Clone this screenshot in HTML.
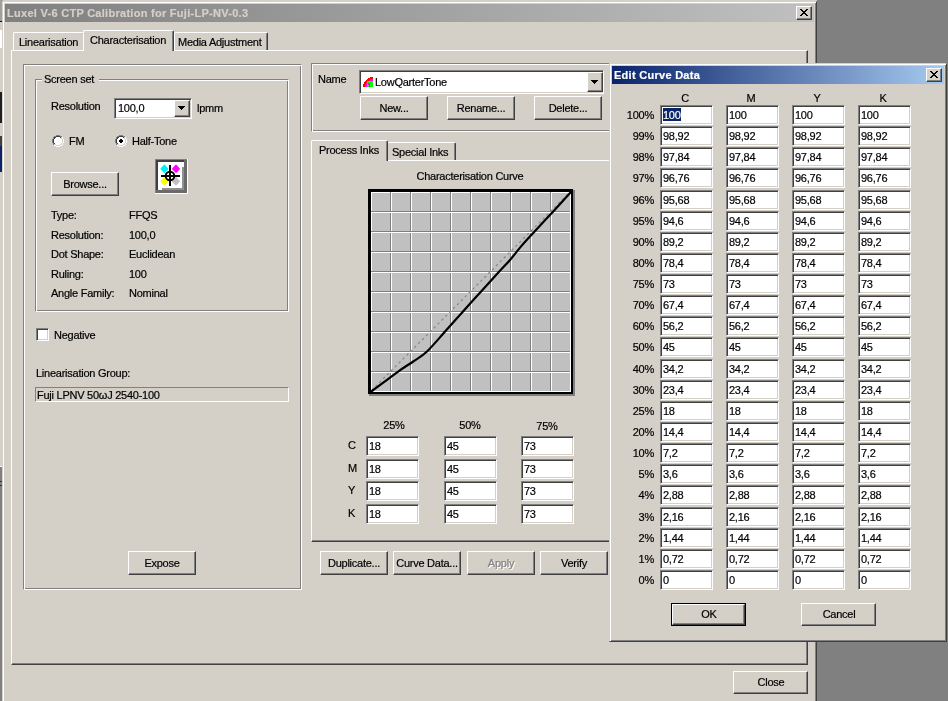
<!DOCTYPE html><html><head><meta charset="utf-8"><style>
html,body{margin:0;padding:0;}
body{width:948px;height:701px;overflow:hidden;position:relative;background:#808080;font-family:"Liberation Sans",sans-serif;font-size:11px;color:#000;}
div{position:absolute;box-sizing:border-box;}
.t{will-change:transform;-webkit-text-stroke:0.2px currentColor;white-space:nowrap;line-height:13px;height:13px;letter-spacing:-0.25px;}
.b{font-weight:bold;letter-spacing:0.28px;}
.btn{background:#d4d0c8;border-style:solid;border-width:1px;border-color:#fff #404040 #404040 #fff;box-shadow:inset -1px -1px #808080;}
.btn.def{border-color:#000;box-shadow:none;}
.btn.def .in{left:0;top:0;right:0;bottom:0;border-style:solid;border-width:1px;border-color:#fff #404040 #404040 #fff;box-shadow:inset -1px -1px #808080;}
.edit{background:#fff;border-style:solid;border-width:1px;border-color:#808080 #fff #fff #808080;box-shadow:inset 1px 1px #404040, inset -1px -1px #d4d0c8;}
.etch{border-style:solid;border-width:1px;border-color:#808080 #fff #fff #808080;box-shadow:inset 1px 1px #fff, inset -1px -1px #808080;}
.win{background:#d4d0c8;border-style:solid;border-width:1px;border-color:#d4d0c8 #404040 #404040 #d4d0c8;box-shadow:inset 1px 1px #fff, inset -1px -1px #808080;}
.panel{background:#d4d0c8;border-style:solid;border-width:1px;border-color:#fff #404040 #404040 #fff;box-shadow:inset -1px -1px #808080;}
.tab{background:#d4d0c8;border-style:solid;border-width:1px 1px 0 1px;border-color:#fff #404040 #404040 #fff;box-shadow:inset -1px 0 #808080;border-radius:2px 2px 0 0;}
</style></head><body>
<div style="left:3px;top:0px;width:814px;height:2px;background:#d4d0c8"></div>
<div style="left:0px;top:0px;width:3px;height:21px;background:#a0a0a0"></div>
<div style="left:0px;top:21px;width:3px;height:1px;background:#000"></div>
<div style="left:0px;top:22px;width:3px;height:8px;background:#d4d0c8"></div>
<div style="left:0px;top:30px;width:3px;height:18px;background:#fff"></div>
<div style="left:0px;top:48px;width:3px;height:44px;background:#d4d0c8"></div>
<div style="left:0px;top:92px;width:3px;height:31px;background:#202020"></div>
<div style="left:0px;top:123px;width:3px;height:13px;background:#d4d0c8"></div>
<div style="left:0px;top:136px;width:3px;height:10px;background:#404040"></div>
<div style="left:0px;top:146px;width:3px;height:26px;background:#0a246a"></div>
<div style="left:0px;top:172px;width:3px;height:295px;background:#d4d0c8"></div>
<div style="left:0px;top:466px;width:3px;height:1px;background:#fff"></div>
<div style="left:0px;top:481px;width:3px;height:1px;background:#303030"></div>
<div style="left:0px;top:485px;width:3px;height:1px;background:#303030"></div>
<div style="left:0px;top:488px;width:3px;height:213px;background:#808080"></div>
<div class="win" style="left:2px;top:1px;width:815px;height:720px"></div>
<div style="left:5px;top:4px;width:809px;height:18px;background:linear-gradient(90deg,#808080,#c0c0c0)"></div>
<div class="t b" style="left:7px;top:7px;color:#d4d0c8">Luxel V-6 CTP Calibration for Fuji-LP-NV-0.3</div>
<div class="btn" style="left:796px;top:6px;width:16px;height:14px"></div>
<svg style="position:absolute;left:796px;top:6px" width="16" height="14"><g fill="#000"><rect x="4" y="3" width="1" height="1"/><rect x="5" y="3" width="1" height="1"/><rect x="10" y="3" width="1" height="1"/><rect x="11" y="3" width="1" height="1"/><rect x="5" y="4" width="1" height="1"/><rect x="6" y="4" width="1" height="1"/><rect x="9" y="4" width="1" height="1"/><rect x="10" y="4" width="1" height="1"/><rect x="6" y="5" width="1" height="1"/><rect x="7" y="5" width="1" height="1"/><rect x="8" y="5" width="1" height="1"/><rect x="9" y="5" width="1" height="1"/><rect x="7" y="6" width="1" height="1"/><rect x="8" y="6" width="1" height="1"/><rect x="6" y="7" width="1" height="1"/><rect x="7" y="7" width="1" height="1"/><rect x="8" y="7" width="1" height="1"/><rect x="9" y="7" width="1" height="1"/><rect x="5" y="8" width="1" height="1"/><rect x="6" y="8" width="1" height="1"/><rect x="9" y="8" width="1" height="1"/><rect x="10" y="8" width="1" height="1"/><rect x="4" y="9" width="1" height="1"/><rect x="5" y="9" width="1" height="1"/><rect x="10" y="9" width="1" height="1"/><rect x="11" y="9" width="1" height="1"/></g></svg>
<div class="panel" style="left:11px;top:50px;width:797px;height:615px"></div>
<div class="tab" style="left:13px;top:32px;width:72px;height:18px"></div>
<div class="tab" style="left:174px;top:32px;width:94px;height:18px"></div>
<div class="tab" style="left:83px;top:30px;width:91px;height:21px;"></div>
<div class="t" style="left:19px;top:36px;">Linearisation</div>
<div class="t" style="left:90px;top:34px;">Characterisation</div>
<div class="t" style="left:178px;top:36px;">Media Adjustment</div>
<div class="btn" style="left:733px;top:671px;width:75px;height:23px"></div>
<div class="t" style="left:670.5px;width:200px;text-align:center;top:676px;">Close</div>
<div class="etch" style="left:23px;top:64px;width:279px;height:526px"></div>
<div class="etch" style="left:35px;top:79px;width:254px;height:233px"></div>
<div style="left:42px;top:73px;width:57px;height:12px;background:#d4d0c8"></div>
<div class="t" style="left:44px;top:73px;">Screen set</div>
<div class="t" style="left:51px;top:100px;">Resolution</div>
<div class="edit" style="left:114px;top:98px;width:78px;height:21px"></div>
<div class="t" style="left:118px;top:102px;">100,0</div>
<div class="btn" style="left:174px;top:100px;width:16px;height:17px"></div>
<svg style="position:absolute;left:174px;top:100px" width="16" height="17"><path d="M4 6h7M5 7h5M6 8h3M7 9h1" stroke="#000" shape-rendering="crispEdges"/></svg>
<div class="t" style="left:197px;top:102px;">lpmm</div>
<svg style="position:absolute;left:52px;top:135px" width="12" height="12" shape-rendering="crispEdges"><rect x="2" y="1" width="8" height="1" fill="#fff"/><rect x="1" y="2" width="10" height="1" fill="#fff"/><rect x="1" y="3" width="10" height="1" fill="#fff"/><rect x="0" y="4" width="12" height="1" fill="#fff"/><rect x="0" y="5" width="12" height="1" fill="#fff"/><rect x="0" y="6" width="12" height="1" fill="#fff"/><rect x="0" y="7" width="12" height="1" fill="#fff"/><rect x="1" y="8" width="10" height="1" fill="#fff"/><rect x="1" y="9" width="10" height="1" fill="#fff"/><rect x="2" y="10" width="8" height="1" fill="#fff"/><rect x="4" y="0" width="1" height="1" fill="#808080"/><rect x="5" y="0" width="1" height="1" fill="#808080"/><rect x="6" y="0" width="1" height="1" fill="#808080"/><rect x="7" y="0" width="1" height="1" fill="#808080"/><rect x="2" y="1" width="1" height="1" fill="#808080"/><rect x="3" y="1" width="1" height="1" fill="#808080"/><rect x="8" y="1" width="1" height="1" fill="#808080"/><rect x="9" y="1" width="1" height="1" fill="#808080"/><rect x="1" y="2" width="1" height="1" fill="#808080"/><rect x="10" y="2" width="1" height="1" fill="#fff"/><rect x="1" y="3" width="1" height="1" fill="#808080"/><rect x="10" y="3" width="1" height="1" fill="#fff"/><rect x="0" y="4" width="1" height="1" fill="#808080"/><rect x="11" y="4" width="1" height="1" fill="#fff"/><rect x="0" y="5" width="1" height="1" fill="#808080"/><rect x="11" y="5" width="1" height="1" fill="#fff"/><rect x="0" y="6" width="1" height="1" fill="#808080"/><rect x="11" y="6" width="1" height="1" fill="#fff"/><rect x="0" y="7" width="1" height="1" fill="#808080"/><rect x="11" y="7" width="1" height="1" fill="#fff"/><rect x="1" y="8" width="1" height="1" fill="#808080"/><rect x="10" y="8" width="1" height="1" fill="#fff"/><rect x="1" y="9" width="1" height="1" fill="#808080"/><rect x="10" y="9" width="1" height="1" fill="#fff"/><rect x="2" y="10" width="1" height="1" fill="#fff"/><rect x="3" y="10" width="1" height="1" fill="#fff"/><rect x="8" y="10" width="1" height="1" fill="#fff"/><rect x="9" y="10" width="1" height="1" fill="#fff"/><rect x="4" y="11" width="1" height="1" fill="#fff"/><rect x="5" y="11" width="1" height="1" fill="#fff"/><rect x="6" y="11" width="1" height="1" fill="#fff"/><rect x="7" y="11" width="1" height="1" fill="#fff"/><rect x="4" y="1" width="1" height="1" fill="#404040"/><rect x="5" y="1" width="1" height="1" fill="#404040"/><rect x="6" y="1" width="1" height="1" fill="#404040"/><rect x="7" y="1" width="1" height="1" fill="#404040"/><rect x="2" y="2" width="1" height="1" fill="#404040"/><rect x="3" y="2" width="1" height="1" fill="#404040"/><rect x="8" y="2" width="1" height="1" fill="#404040"/><rect x="9" y="2" width="1" height="1" fill="#d4d0c8"/><rect x="2" y="3" width="1" height="1" fill="#404040"/><rect x="9" y="3" width="1" height="1" fill="#d4d0c8"/><rect x="1" y="4" width="1" height="1" fill="#404040"/><rect x="10" y="4" width="1" height="1" fill="#d4d0c8"/><rect x="1" y="5" width="1" height="1" fill="#404040"/><rect x="10" y="5" width="1" height="1" fill="#d4d0c8"/><rect x="1" y="6" width="1" height="1" fill="#404040"/><rect x="10" y="6" width="1" height="1" fill="#d4d0c8"/><rect x="1" y="7" width="1" height="1" fill="#404040"/><rect x="10" y="7" width="1" height="1" fill="#d4d0c8"/><rect x="2" y="8" width="1" height="1" fill="#404040"/><rect x="9" y="8" width="1" height="1" fill="#d4d0c8"/><rect x="2" y="9" width="1" height="1" fill="#d4d0c8"/><rect x="3" y="9" width="1" height="1" fill="#d4d0c8"/><rect x="8" y="9" width="1" height="1" fill="#d4d0c8"/><rect x="9" y="9" width="1" height="1" fill="#d4d0c8"/><rect x="4" y="10" width="1" height="1" fill="#d4d0c8"/><rect x="5" y="10" width="1" height="1" fill="#d4d0c8"/><rect x="6" y="10" width="1" height="1" fill="#d4d0c8"/><rect x="7" y="10" width="1" height="1" fill="#d4d0c8"/></svg>
<div class="t" style="left:69px;top:135px;">FM</div>
<svg style="position:absolute;left:115px;top:135px" width="12" height="12" shape-rendering="crispEdges"><rect x="2" y="1" width="8" height="1" fill="#fff"/><rect x="1" y="2" width="10" height="1" fill="#fff"/><rect x="1" y="3" width="10" height="1" fill="#fff"/><rect x="0" y="4" width="12" height="1" fill="#fff"/><rect x="0" y="5" width="12" height="1" fill="#fff"/><rect x="0" y="6" width="12" height="1" fill="#fff"/><rect x="0" y="7" width="12" height="1" fill="#fff"/><rect x="1" y="8" width="10" height="1" fill="#fff"/><rect x="1" y="9" width="10" height="1" fill="#fff"/><rect x="2" y="10" width="8" height="1" fill="#fff"/><rect x="4" y="0" width="1" height="1" fill="#808080"/><rect x="5" y="0" width="1" height="1" fill="#808080"/><rect x="6" y="0" width="1" height="1" fill="#808080"/><rect x="7" y="0" width="1" height="1" fill="#808080"/><rect x="2" y="1" width="1" height="1" fill="#808080"/><rect x="3" y="1" width="1" height="1" fill="#808080"/><rect x="8" y="1" width="1" height="1" fill="#808080"/><rect x="9" y="1" width="1" height="1" fill="#808080"/><rect x="1" y="2" width="1" height="1" fill="#808080"/><rect x="10" y="2" width="1" height="1" fill="#fff"/><rect x="1" y="3" width="1" height="1" fill="#808080"/><rect x="10" y="3" width="1" height="1" fill="#fff"/><rect x="0" y="4" width="1" height="1" fill="#808080"/><rect x="11" y="4" width="1" height="1" fill="#fff"/><rect x="0" y="5" width="1" height="1" fill="#808080"/><rect x="11" y="5" width="1" height="1" fill="#fff"/><rect x="0" y="6" width="1" height="1" fill="#808080"/><rect x="11" y="6" width="1" height="1" fill="#fff"/><rect x="0" y="7" width="1" height="1" fill="#808080"/><rect x="11" y="7" width="1" height="1" fill="#fff"/><rect x="1" y="8" width="1" height="1" fill="#808080"/><rect x="10" y="8" width="1" height="1" fill="#fff"/><rect x="1" y="9" width="1" height="1" fill="#808080"/><rect x="10" y="9" width="1" height="1" fill="#fff"/><rect x="2" y="10" width="1" height="1" fill="#fff"/><rect x="3" y="10" width="1" height="1" fill="#fff"/><rect x="8" y="10" width="1" height="1" fill="#fff"/><rect x="9" y="10" width="1" height="1" fill="#fff"/><rect x="4" y="11" width="1" height="1" fill="#fff"/><rect x="5" y="11" width="1" height="1" fill="#fff"/><rect x="6" y="11" width="1" height="1" fill="#fff"/><rect x="7" y="11" width="1" height="1" fill="#fff"/><rect x="4" y="1" width="1" height="1" fill="#404040"/><rect x="5" y="1" width="1" height="1" fill="#404040"/><rect x="6" y="1" width="1" height="1" fill="#404040"/><rect x="7" y="1" width="1" height="1" fill="#404040"/><rect x="2" y="2" width="1" height="1" fill="#404040"/><rect x="3" y="2" width="1" height="1" fill="#404040"/><rect x="8" y="2" width="1" height="1" fill="#404040"/><rect x="9" y="2" width="1" height="1" fill="#d4d0c8"/><rect x="2" y="3" width="1" height="1" fill="#404040"/><rect x="9" y="3" width="1" height="1" fill="#d4d0c8"/><rect x="1" y="4" width="1" height="1" fill="#404040"/><rect x="10" y="4" width="1" height="1" fill="#d4d0c8"/><rect x="1" y="5" width="1" height="1" fill="#404040"/><rect x="10" y="5" width="1" height="1" fill="#d4d0c8"/><rect x="1" y="6" width="1" height="1" fill="#404040"/><rect x="10" y="6" width="1" height="1" fill="#d4d0c8"/><rect x="1" y="7" width="1" height="1" fill="#404040"/><rect x="10" y="7" width="1" height="1" fill="#d4d0c8"/><rect x="2" y="8" width="1" height="1" fill="#404040"/><rect x="9" y="8" width="1" height="1" fill="#d4d0c8"/><rect x="2" y="9" width="1" height="1" fill="#d4d0c8"/><rect x="3" y="9" width="1" height="1" fill="#d4d0c8"/><rect x="8" y="9" width="1" height="1" fill="#d4d0c8"/><rect x="9" y="9" width="1" height="1" fill="#d4d0c8"/><rect x="4" y="10" width="1" height="1" fill="#d4d0c8"/><rect x="5" y="10" width="1" height="1" fill="#d4d0c8"/><rect x="6" y="10" width="1" height="1" fill="#d4d0c8"/><rect x="7" y="10" width="1" height="1" fill="#d4d0c8"/><rect x="5" y="4" width="2" height="4" fill="#000"/><rect x="4" y="5" width="4" height="2" fill="#000"/></svg>
<div class="t" style="left:132px;top:135px;">Half-Tone</div>
<div class="btn" style="left:51px;top:172px;width:68px;height:24px"></div>
<div class="t" style="left:-15.0px;width:200px;text-align:center;top:178px;">Browse...</div>
<svg style="position:absolute;left:155px;top:159px" width="33" height="35" shape-rendering="crispEdges">
<rect x="0" y="0" width="33" height="35" fill="#fff"/>
<rect x="0" y="0" width="32" height="1" fill="#808080"/>
<rect x="0" y="0" width="1" height="34" fill="#808080"/>
<rect x="1" y="1" width="31" height="2" fill="#404040"/>
<rect x="1" y="1" width="2" height="33" fill="#404040"/>
<rect x="29" y="1" width="3" height="33" fill="#6a6a6a"/>
<rect x="1" y="31" width="31" height="3" fill="#6a6a6a"/>
<rect x="7" y="29" width="22" height="2" fill="#909090"/>
<rect x="27" y="8" width="2" height="23" fill="#909090"/>
</svg>
<svg style="position:absolute;left:155px;top:159px" width="33" height="35">
<path d="M9.4 6.2 L12.8 9.8 L9.4 13.4 L6 9.8Z" fill="#00f0f0" stroke="#00f0f0" stroke-width="1.2" stroke-linejoin="round"/>
<path d="M21 6.2 L24.4 9.8 L21 13.4 L17.6 9.8Z" fill="#ff00ff" stroke="#ff00ff" stroke-width="1.2" stroke-linejoin="round"/>
<path d="M9.4 18.7 L12.8 22.3 L9.4 25.9 L6 22.3Z" fill="#ffff00" stroke="#ffff00" stroke-width="1.2" stroke-linejoin="round"/>
<path d="M21 18.7 L24.4 22.3 L21 25.9 L17.6 22.3Z" fill="#c0c0c0" stroke="#c0c0c0" stroke-width="1.2" stroke-linejoin="round"/>
<circle cx="15" cy="17" r="4.3" stroke="#000" stroke-width="2" fill="none"/>
<path d="M6 17H25M15 6V27" stroke="#000" stroke-width="2"/>
</svg>
<div class="t" style="left:51px;top:209px;">Type:</div>
<div class="t" style="left:129px;top:209px;">FFQS</div>
<div class="t" style="left:51px;top:229px;">Resolution:</div>
<div class="t" style="left:129px;top:229px;">100,0</div>
<div class="t" style="left:51px;top:248px;">Dot Shape:</div>
<div class="t" style="left:129px;top:248px;">Euclidean</div>
<div class="t" style="left:51px;top:268px;">Ruling:</div>
<div class="t" style="left:129px;top:268px;">100</div>
<div class="t" style="left:51px;top:287px;">Angle Family:</div>
<div class="t" style="left:129px;top:287px;">Nominal</div>
<div class="edit" style="left:36px;top:328px;width:13px;height:13px"></div>
<div class="t" style="left:54px;top:329px;">Negative</div>
<div class="t" style="left:36px;top:367px;">Linearisation Group:</div>
<div style="left:35px;top:387px;width:254px;height:15px;border-style:solid;border-width:1px;border-color:#808080 #fff #fff #808080"></div>
<div class="t" style="left:37px;top:389px;">Fuji LPNV 50&#969;J 2540-100</div>
<div class="btn" style="left:128px;top:551px;width:68px;height:24px"></div>
<div class="t" style="left:62.0px;width:200px;text-align:center;top:557px;">Expose</div>
<div class="etch" style="left:311px;top:63px;width:310px;height:69px"></div>
<div class="t" style="left:318px;top:73px;">Name</div>
<div class="edit" style="left:359px;top:70px;width:245px;height:24px"></div>
<svg style="position:absolute;left:363px;top:77px" width="10" height="10" shape-rendering="crispEdges"><path d="M0 10 A10 10 0 0 1 10 0 V10Z" fill="#ff0000"/><path d="M2 10 A8 8 0 0 1 10 2 V10Z" fill="#ff00ff"/><rect x="4" y="4" width="6" height="6" fill="#00ff00"/><rect x="5" y="6" width="2" height="2" fill="#ff00ff"/><rect x="6" y="8" width="1" height="2" fill="#ff00ff"/></svg>
<div class="t" style="left:375px;top:76px;">LowQarterTone</div>
<div class="btn" style="left:587px;top:72px;width:16px;height:20px"></div>
<svg style="position:absolute;left:587px;top:72px" width="16" height="20"><path d="M4 8h7M5 9h5M6 10h3M7 11h1" stroke="#000" shape-rendering="crispEdges"/></svg>
<div class="btn" style="left:360px;top:96px;width:68px;height:24px"></div>
<div class="t" style="left:294.0px;width:200px;text-align:center;top:102px;">New...</div>
<div class="btn" style="left:447px;top:96px;width:68px;height:24px"></div>
<div class="t" style="left:381.0px;width:200px;text-align:center;top:102px;">Rename...</div>
<div class="btn" style="left:534px;top:96px;width:68px;height:24px"></div>
<div class="t" style="left:468.0px;width:200px;text-align:center;top:102px;">Delete...</div>
<div class="panel" style="left:311px;top:160px;width:310px;height:382px"></div>
<div class="tab" style="left:387px;top:142px;width:69px;height:18px"></div>
<div class="tab" style="left:311px;top:140px;width:77px;height:21px"></div>
<div class="t" style="left:319px;top:144px;">Process Inks</div>
<div class="t" style="left:392px;top:146px;">Special Inks</div>
<div class="t" style="left:370px;width:200px;text-align:center;top:170px;">Characterisation Curve</div>
<svg style="position:absolute;left:0;top:0" width="948" height="701">
<rect x="368" y="189" width="205" height="205" fill="#000"/>
<rect x="573" y="190" width="2" height="206" fill="#808080"/>
<rect x="369" y="394" width="206" height="2" fill="#808080"/>
<rect x="371" y="192" width="200" height="200" fill="#fff"/>
<rect x="372" y="193" width="198" height="198" fill="#c0c0c0"/>
<rect x="390" y="192" width="1" height="199" fill="#808080"/><rect x="391" y="192" width="1" height="199" fill="#fff"/><rect x="410" y="192" width="1" height="199" fill="#808080"/><rect x="411" y="192" width="1" height="199" fill="#fff"/><rect x="430" y="192" width="1" height="199" fill="#808080"/><rect x="431" y="192" width="1" height="199" fill="#fff"/><rect x="450" y="192" width="1" height="199" fill="#808080"/><rect x="451" y="192" width="1" height="199" fill="#fff"/><rect x="470" y="192" width="1" height="199" fill="#808080"/><rect x="471" y="192" width="1" height="199" fill="#fff"/><rect x="490" y="192" width="1" height="199" fill="#808080"/><rect x="491" y="192" width="1" height="199" fill="#fff"/><rect x="510" y="192" width="1" height="199" fill="#808080"/><rect x="511" y="192" width="1" height="199" fill="#fff"/><rect x="530" y="192" width="1" height="199" fill="#808080"/><rect x="531" y="192" width="1" height="199" fill="#fff"/><rect x="550" y="192" width="1" height="199" fill="#808080"/><rect x="551" y="192" width="1" height="199" fill="#fff"/><rect x="371" y="211" width="199" height="1" fill="#808080"/><rect x="371" y="212" width="199" height="1" fill="#fff"/><rect x="371" y="231" width="199" height="1" fill="#808080"/><rect x="371" y="232" width="199" height="1" fill="#fff"/><rect x="371" y="251" width="199" height="1" fill="#808080"/><rect x="371" y="252" width="199" height="1" fill="#fff"/><rect x="371" y="271" width="199" height="1" fill="#808080"/><rect x="371" y="272" width="199" height="1" fill="#fff"/><rect x="371" y="291" width="199" height="1" fill="#808080"/><rect x="371" y="292" width="199" height="1" fill="#fff"/><rect x="371" y="311" width="199" height="1" fill="#808080"/><rect x="371" y="312" width="199" height="1" fill="#fff"/><rect x="371" y="331" width="199" height="1" fill="#808080"/><rect x="371" y="332" width="199" height="1" fill="#fff"/><rect x="371" y="351" width="199" height="1" fill="#808080"/><rect x="371" y="352" width="199" height="1" fill="#fff"/><rect x="371" y="371" width="199" height="1" fill="#808080"/><rect x="371" y="372" width="199" height="1" fill="#fff"/>
<path d="M371.5 390.5 L569.5 192.5" stroke="#8a8a8a" stroke-width="1.3" stroke-dasharray="2.5 3" fill="none"/>
<path d="M371.5 391.5 C380.3 384.9 390.9 376.8 397.8 371.8 C404.8 366.8 408.3 364.9 413.2 361.5 C418.1 358.1 421.5 356.7 427.0 351.5 C432.5 346.3 440.0 337.1 446.0 330.5 C452.0 323.9 456.6 318.6 462.8 311.7 C469.0 304.8 477.4 295.5 483.4 288.9 C489.4 282.3 494.4 276.8 498.8 272.0 C503.2 267.2 506.2 264.4 510.0 260.0 C513.8 255.6 517.6 250.4 521.7 245.6 C525.8 240.8 529.4 237.1 534.6 231.4 C539.8 225.8 547.0 218.2 553.0 211.7 C559.0 205.2 564.7 198.9 570.5 192.5" stroke="#000" stroke-width="2.2" fill="none" stroke-linecap="round"/>
</svg>
<div class="t" style="left:294px;width:200px;text-align:center;top:419px;">25%</div>
<div class="t" style="left:370px;width:200px;text-align:center;top:419px;">50%</div>
<div class="t" style="left:447px;width:200px;text-align:center;top:420px;">75%</div>
<div class="t" style="left:348px;top:439px;">C</div>
<div class="edit" style="left:366px;top:436px;width:53px;height:20px"></div>
<div class="t" style="left:369px;top:440px;">18</div>
<div class="edit" style="left:444px;top:436px;width:53px;height:20px"></div>
<div class="t" style="left:447px;top:440px;">45</div>
<div class="edit" style="left:521px;top:436px;width:53px;height:20px"></div>
<div class="t" style="left:524px;top:440px;">73</div>
<div class="t" style="left:348px;top:462px;">M</div>
<div class="edit" style="left:366px;top:459px;width:53px;height:20px"></div>
<div class="t" style="left:369px;top:463px;">18</div>
<div class="edit" style="left:444px;top:459px;width:53px;height:20px"></div>
<div class="t" style="left:447px;top:463px;">45</div>
<div class="edit" style="left:521px;top:459px;width:53px;height:20px"></div>
<div class="t" style="left:524px;top:463px;">73</div>
<div class="t" style="left:348px;top:484px;">Y</div>
<div class="edit" style="left:366px;top:481px;width:53px;height:20px"></div>
<div class="t" style="left:369px;top:485px;">18</div>
<div class="edit" style="left:444px;top:481px;width:53px;height:20px"></div>
<div class="t" style="left:447px;top:485px;">45</div>
<div class="edit" style="left:521px;top:481px;width:53px;height:20px"></div>
<div class="t" style="left:524px;top:485px;">73</div>
<div class="t" style="left:348px;top:507px;">K</div>
<div class="edit" style="left:366px;top:504px;width:53px;height:20px"></div>
<div class="t" style="left:369px;top:508px;">18</div>
<div class="edit" style="left:444px;top:504px;width:53px;height:20px"></div>
<div class="t" style="left:447px;top:508px;">45</div>
<div class="edit" style="left:521px;top:504px;width:53px;height:20px"></div>
<div class="t" style="left:524px;top:508px;">73</div>
<div class="btn" style="left:320px;top:551px;width:68px;height:24px"></div>
<div class="t" style="left:254.0px;width:200px;text-align:center;top:557px;">Duplicate...</div>
<div class="btn" style="left:393px;top:551px;width:68px;height:24px"></div>
<div class="t" style="left:327.0px;width:200px;text-align:center;top:557px;">Curve Data...</div>
<div class="btn" style="left:467px;top:551px;width:68px;height:24px"></div>
<div class="t" style="left:402.0px;width:200px;text-align:center;top:558px;color:#fff">Apply</div>
<div class="t" style="left:401.0px;width:200px;text-align:center;top:557px;color:#808080">Apply</div>
<div class="btn" style="left:540px;top:551px;width:68px;height:24px"></div>
<div class="t" style="left:474.0px;width:200px;text-align:center;top:557px;">Verify</div>
<div class="win" style="left:609px;top:63px;width:338px;height:579px"></div>
<div style="left:612px;top:66px;width:332px;height:18px;background:linear-gradient(90deg,#0a246a,#a6caf0)"></div>
<div class="t b" style="left:614px;top:69px;color:#fff">Edit Curve Data</div>
<div class="btn" style="left:926px;top:68px;width:16px;height:14px"></div>
<svg style="position:absolute;left:926px;top:68px" width="16" height="14"><g fill="#000"><rect x="4" y="3" width="1" height="1"/><rect x="5" y="3" width="1" height="1"/><rect x="10" y="3" width="1" height="1"/><rect x="11" y="3" width="1" height="1"/><rect x="5" y="4" width="1" height="1"/><rect x="6" y="4" width="1" height="1"/><rect x="9" y="4" width="1" height="1"/><rect x="10" y="4" width="1" height="1"/><rect x="6" y="5" width="1" height="1"/><rect x="7" y="5" width="1" height="1"/><rect x="8" y="5" width="1" height="1"/><rect x="9" y="5" width="1" height="1"/><rect x="7" y="6" width="1" height="1"/><rect x="8" y="6" width="1" height="1"/><rect x="6" y="7" width="1" height="1"/><rect x="7" y="7" width="1" height="1"/><rect x="8" y="7" width="1" height="1"/><rect x="9" y="7" width="1" height="1"/><rect x="5" y="8" width="1" height="1"/><rect x="6" y="8" width="1" height="1"/><rect x="9" y="8" width="1" height="1"/><rect x="10" y="8" width="1" height="1"/><rect x="4" y="9" width="1" height="1"/><rect x="5" y="9" width="1" height="1"/><rect x="10" y="9" width="1" height="1"/><rect x="11" y="9" width="1" height="1"/></g></svg>
<div class="t" style="left:585px;width:200px;text-align:center;top:92px;">C</div>
<div class="t" style="left:651px;width:200px;text-align:center;top:92px;">M</div>
<div class="t" style="left:717px;width:200px;text-align:center;top:92px;">Y</div>
<div class="t" style="left:783px;width:200px;text-align:center;top:92px;">K</div>
<div class="t" style="left:454px;width:200px;text-align:right;top:109px;">100%</div>
<div class="edit" style="left:660px;top:105px;width:53px;height:20px"></div>
<div style="left:663px;top:108px;width:18px;height:13px;background:#0a246a"></div>
<div class="t" style="left:663px;top:109px;width:18px;overflow:hidden;color:#fff">100</div>
<div class="edit" style="left:726px;top:105px;width:53px;height:20px"></div>
<div class="t" style="left:729px;top:109px;">100</div>
<div class="edit" style="left:792px;top:105px;width:53px;height:20px"></div>
<div class="t" style="left:795px;top:109px;">100</div>
<div class="edit" style="left:858px;top:105px;width:53px;height:20px"></div>
<div class="t" style="left:861px;top:109px;">100</div>
<div class="t" style="left:454px;width:200px;text-align:right;top:130px;">99%</div>
<div class="edit" style="left:660px;top:126px;width:53px;height:20px"></div>
<div class="t" style="left:663px;top:130px;">98,92</div>
<div class="edit" style="left:726px;top:126px;width:53px;height:20px"></div>
<div class="t" style="left:729px;top:130px;">98,92</div>
<div class="edit" style="left:792px;top:126px;width:53px;height:20px"></div>
<div class="t" style="left:795px;top:130px;">98,92</div>
<div class="edit" style="left:858px;top:126px;width:53px;height:20px"></div>
<div class="t" style="left:861px;top:130px;">98,92</div>
<div class="t" style="left:454px;width:200px;text-align:right;top:151px;">98%</div>
<div class="edit" style="left:660px;top:147px;width:53px;height:20px"></div>
<div class="t" style="left:663px;top:151px;">97,84</div>
<div class="edit" style="left:726px;top:147px;width:53px;height:20px"></div>
<div class="t" style="left:729px;top:151px;">97,84</div>
<div class="edit" style="left:792px;top:147px;width:53px;height:20px"></div>
<div class="t" style="left:795px;top:151px;">97,84</div>
<div class="edit" style="left:858px;top:147px;width:53px;height:20px"></div>
<div class="t" style="left:861px;top:151px;">97,84</div>
<div class="t" style="left:454px;width:200px;text-align:right;top:172px;">97%</div>
<div class="edit" style="left:660px;top:168px;width:53px;height:20px"></div>
<div class="t" style="left:663px;top:172px;">96,76</div>
<div class="edit" style="left:726px;top:168px;width:53px;height:20px"></div>
<div class="t" style="left:729px;top:172px;">96,76</div>
<div class="edit" style="left:792px;top:168px;width:53px;height:20px"></div>
<div class="t" style="left:795px;top:172px;">96,76</div>
<div class="edit" style="left:858px;top:168px;width:53px;height:20px"></div>
<div class="t" style="left:861px;top:172px;">96,76</div>
<div class="t" style="left:454px;width:200px;text-align:right;top:194px;">96%</div>
<div class="edit" style="left:660px;top:190px;width:53px;height:20px"></div>
<div class="t" style="left:663px;top:194px;">95,68</div>
<div class="edit" style="left:726px;top:190px;width:53px;height:20px"></div>
<div class="t" style="left:729px;top:194px;">95,68</div>
<div class="edit" style="left:792px;top:190px;width:53px;height:20px"></div>
<div class="t" style="left:795px;top:194px;">95,68</div>
<div class="edit" style="left:858px;top:190px;width:53px;height:20px"></div>
<div class="t" style="left:861px;top:194px;">95,68</div>
<div class="t" style="left:454px;width:200px;text-align:right;top:215px;">95%</div>
<div class="edit" style="left:660px;top:211px;width:53px;height:20px"></div>
<div class="t" style="left:663px;top:215px;">94,6</div>
<div class="edit" style="left:726px;top:211px;width:53px;height:20px"></div>
<div class="t" style="left:729px;top:215px;">94,6</div>
<div class="edit" style="left:792px;top:211px;width:53px;height:20px"></div>
<div class="t" style="left:795px;top:215px;">94,6</div>
<div class="edit" style="left:858px;top:211px;width:53px;height:20px"></div>
<div class="t" style="left:861px;top:215px;">94,6</div>
<div class="t" style="left:454px;width:200px;text-align:right;top:236px;">90%</div>
<div class="edit" style="left:660px;top:232px;width:53px;height:20px"></div>
<div class="t" style="left:663px;top:236px;">89,2</div>
<div class="edit" style="left:726px;top:232px;width:53px;height:20px"></div>
<div class="t" style="left:729px;top:236px;">89,2</div>
<div class="edit" style="left:792px;top:232px;width:53px;height:20px"></div>
<div class="t" style="left:795px;top:236px;">89,2</div>
<div class="edit" style="left:858px;top:232px;width:53px;height:20px"></div>
<div class="t" style="left:861px;top:236px;">89,2</div>
<div class="t" style="left:454px;width:200px;text-align:right;top:257px;">80%</div>
<div class="edit" style="left:660px;top:253px;width:53px;height:20px"></div>
<div class="t" style="left:663px;top:257px;">78,4</div>
<div class="edit" style="left:726px;top:253px;width:53px;height:20px"></div>
<div class="t" style="left:729px;top:257px;">78,4</div>
<div class="edit" style="left:792px;top:253px;width:53px;height:20px"></div>
<div class="t" style="left:795px;top:257px;">78,4</div>
<div class="edit" style="left:858px;top:253px;width:53px;height:20px"></div>
<div class="t" style="left:861px;top:257px;">78,4</div>
<div class="t" style="left:454px;width:200px;text-align:right;top:278px;">75%</div>
<div class="edit" style="left:660px;top:274px;width:53px;height:20px"></div>
<div class="t" style="left:663px;top:278px;">73</div>
<div class="edit" style="left:726px;top:274px;width:53px;height:20px"></div>
<div class="t" style="left:729px;top:278px;">73</div>
<div class="edit" style="left:792px;top:274px;width:53px;height:20px"></div>
<div class="t" style="left:795px;top:278px;">73</div>
<div class="edit" style="left:858px;top:274px;width:53px;height:20px"></div>
<div class="t" style="left:861px;top:278px;">73</div>
<div class="t" style="left:454px;width:200px;text-align:right;top:299px;">70%</div>
<div class="edit" style="left:660px;top:295px;width:53px;height:20px"></div>
<div class="t" style="left:663px;top:299px;">67,4</div>
<div class="edit" style="left:726px;top:295px;width:53px;height:20px"></div>
<div class="t" style="left:729px;top:299px;">67,4</div>
<div class="edit" style="left:792px;top:295px;width:53px;height:20px"></div>
<div class="t" style="left:795px;top:299px;">67,4</div>
<div class="edit" style="left:858px;top:295px;width:53px;height:20px"></div>
<div class="t" style="left:861px;top:299px;">67,4</div>
<div class="t" style="left:454px;width:200px;text-align:right;top:320px;">60%</div>
<div class="edit" style="left:660px;top:316px;width:53px;height:20px"></div>
<div class="t" style="left:663px;top:320px;">56,2</div>
<div class="edit" style="left:726px;top:316px;width:53px;height:20px"></div>
<div class="t" style="left:729px;top:320px;">56,2</div>
<div class="edit" style="left:792px;top:316px;width:53px;height:20px"></div>
<div class="t" style="left:795px;top:320px;">56,2</div>
<div class="edit" style="left:858px;top:316px;width:53px;height:20px"></div>
<div class="t" style="left:861px;top:320px;">56,2</div>
<div class="t" style="left:454px;width:200px;text-align:right;top:341px;">50%</div>
<div class="edit" style="left:660px;top:337px;width:53px;height:20px"></div>
<div class="t" style="left:663px;top:341px;">45</div>
<div class="edit" style="left:726px;top:337px;width:53px;height:20px"></div>
<div class="t" style="left:729px;top:341px;">45</div>
<div class="edit" style="left:792px;top:337px;width:53px;height:20px"></div>
<div class="t" style="left:795px;top:341px;">45</div>
<div class="edit" style="left:858px;top:337px;width:53px;height:20px"></div>
<div class="t" style="left:861px;top:341px;">45</div>
<div class="t" style="left:454px;width:200px;text-align:right;top:363px;">40%</div>
<div class="edit" style="left:660px;top:359px;width:53px;height:20px"></div>
<div class="t" style="left:663px;top:363px;">34,2</div>
<div class="edit" style="left:726px;top:359px;width:53px;height:20px"></div>
<div class="t" style="left:729px;top:363px;">34,2</div>
<div class="edit" style="left:792px;top:359px;width:53px;height:20px"></div>
<div class="t" style="left:795px;top:363px;">34,2</div>
<div class="edit" style="left:858px;top:359px;width:53px;height:20px"></div>
<div class="t" style="left:861px;top:363px;">34,2</div>
<div class="t" style="left:454px;width:200px;text-align:right;top:384px;">30%</div>
<div class="edit" style="left:660px;top:380px;width:53px;height:20px"></div>
<div class="t" style="left:663px;top:384px;">23,4</div>
<div class="edit" style="left:726px;top:380px;width:53px;height:20px"></div>
<div class="t" style="left:729px;top:384px;">23,4</div>
<div class="edit" style="left:792px;top:380px;width:53px;height:20px"></div>
<div class="t" style="left:795px;top:384px;">23,4</div>
<div class="edit" style="left:858px;top:380px;width:53px;height:20px"></div>
<div class="t" style="left:861px;top:384px;">23,4</div>
<div class="t" style="left:454px;width:200px;text-align:right;top:405px;">25%</div>
<div class="edit" style="left:660px;top:401px;width:53px;height:20px"></div>
<div class="t" style="left:663px;top:405px;">18</div>
<div class="edit" style="left:726px;top:401px;width:53px;height:20px"></div>
<div class="t" style="left:729px;top:405px;">18</div>
<div class="edit" style="left:792px;top:401px;width:53px;height:20px"></div>
<div class="t" style="left:795px;top:405px;">18</div>
<div class="edit" style="left:858px;top:401px;width:53px;height:20px"></div>
<div class="t" style="left:861px;top:405px;">18</div>
<div class="t" style="left:454px;width:200px;text-align:right;top:426px;">20%</div>
<div class="edit" style="left:660px;top:422px;width:53px;height:20px"></div>
<div class="t" style="left:663px;top:426px;">14,4</div>
<div class="edit" style="left:726px;top:422px;width:53px;height:20px"></div>
<div class="t" style="left:729px;top:426px;">14,4</div>
<div class="edit" style="left:792px;top:422px;width:53px;height:20px"></div>
<div class="t" style="left:795px;top:426px;">14,4</div>
<div class="edit" style="left:858px;top:422px;width:53px;height:20px"></div>
<div class="t" style="left:861px;top:426px;">14,4</div>
<div class="t" style="left:454px;width:200px;text-align:right;top:447px;">10%</div>
<div class="edit" style="left:660px;top:443px;width:53px;height:20px"></div>
<div class="t" style="left:663px;top:447px;">7,2</div>
<div class="edit" style="left:726px;top:443px;width:53px;height:20px"></div>
<div class="t" style="left:729px;top:447px;">7,2</div>
<div class="edit" style="left:792px;top:443px;width:53px;height:20px"></div>
<div class="t" style="left:795px;top:447px;">7,2</div>
<div class="edit" style="left:858px;top:443px;width:53px;height:20px"></div>
<div class="t" style="left:861px;top:447px;">7,2</div>
<div class="t" style="left:454px;width:200px;text-align:right;top:468px;">5%</div>
<div class="edit" style="left:660px;top:464px;width:53px;height:20px"></div>
<div class="t" style="left:663px;top:468px;">3,6</div>
<div class="edit" style="left:726px;top:464px;width:53px;height:20px"></div>
<div class="t" style="left:729px;top:468px;">3,6</div>
<div class="edit" style="left:792px;top:464px;width:53px;height:20px"></div>
<div class="t" style="left:795px;top:468px;">3,6</div>
<div class="edit" style="left:858px;top:464px;width:53px;height:20px"></div>
<div class="t" style="left:861px;top:468px;">3,6</div>
<div class="t" style="left:454px;width:200px;text-align:right;top:489px;">4%</div>
<div class="edit" style="left:660px;top:485px;width:53px;height:20px"></div>
<div class="t" style="left:663px;top:489px;">2,88</div>
<div class="edit" style="left:726px;top:485px;width:53px;height:20px"></div>
<div class="t" style="left:729px;top:489px;">2,88</div>
<div class="edit" style="left:792px;top:485px;width:53px;height:20px"></div>
<div class="t" style="left:795px;top:489px;">2,88</div>
<div class="edit" style="left:858px;top:485px;width:53px;height:20px"></div>
<div class="t" style="left:861px;top:489px;">2,88</div>
<div class="t" style="left:454px;width:200px;text-align:right;top:511px;">3%</div>
<div class="edit" style="left:660px;top:507px;width:53px;height:20px"></div>
<div class="t" style="left:663px;top:511px;">2,16</div>
<div class="edit" style="left:726px;top:507px;width:53px;height:20px"></div>
<div class="t" style="left:729px;top:511px;">2,16</div>
<div class="edit" style="left:792px;top:507px;width:53px;height:20px"></div>
<div class="t" style="left:795px;top:511px;">2,16</div>
<div class="edit" style="left:858px;top:507px;width:53px;height:20px"></div>
<div class="t" style="left:861px;top:511px;">2,16</div>
<div class="t" style="left:454px;width:200px;text-align:right;top:532px;">2%</div>
<div class="edit" style="left:660px;top:528px;width:53px;height:20px"></div>
<div class="t" style="left:663px;top:532px;">1,44</div>
<div class="edit" style="left:726px;top:528px;width:53px;height:20px"></div>
<div class="t" style="left:729px;top:532px;">1,44</div>
<div class="edit" style="left:792px;top:528px;width:53px;height:20px"></div>
<div class="t" style="left:795px;top:532px;">1,44</div>
<div class="edit" style="left:858px;top:528px;width:53px;height:20px"></div>
<div class="t" style="left:861px;top:532px;">1,44</div>
<div class="t" style="left:454px;width:200px;text-align:right;top:553px;">1%</div>
<div class="edit" style="left:660px;top:549px;width:53px;height:20px"></div>
<div class="t" style="left:663px;top:553px;">0,72</div>
<div class="edit" style="left:726px;top:549px;width:53px;height:20px"></div>
<div class="t" style="left:729px;top:553px;">0,72</div>
<div class="edit" style="left:792px;top:549px;width:53px;height:20px"></div>
<div class="t" style="left:795px;top:553px;">0,72</div>
<div class="edit" style="left:858px;top:549px;width:53px;height:20px"></div>
<div class="t" style="left:861px;top:553px;">0,72</div>
<div class="t" style="left:454px;width:200px;text-align:right;top:574px;">0%</div>
<div class="edit" style="left:660px;top:570px;width:53px;height:20px"></div>
<div class="t" style="left:663px;top:574px;">0</div>
<div class="edit" style="left:726px;top:570px;width:53px;height:20px"></div>
<div class="t" style="left:729px;top:574px;">0</div>
<div class="edit" style="left:792px;top:570px;width:53px;height:20px"></div>
<div class="t" style="left:795px;top:574px;">0</div>
<div class="edit" style="left:858px;top:570px;width:53px;height:20px"></div>
<div class="t" style="left:861px;top:574px;">0</div>
<div class="btn def" style="left:671px;top:603px;width:75px;height:23px"><div class="in"></div></div>
<div class="t" style="left:608.5px;width:200px;text-align:center;top:608px;">OK</div>
<div class="btn" style="left:801px;top:603px;width:75px;height:23px"></div>
<div class="t" style="left:738.5px;width:200px;text-align:center;top:608px;">Cancel</div>
</body></html>
